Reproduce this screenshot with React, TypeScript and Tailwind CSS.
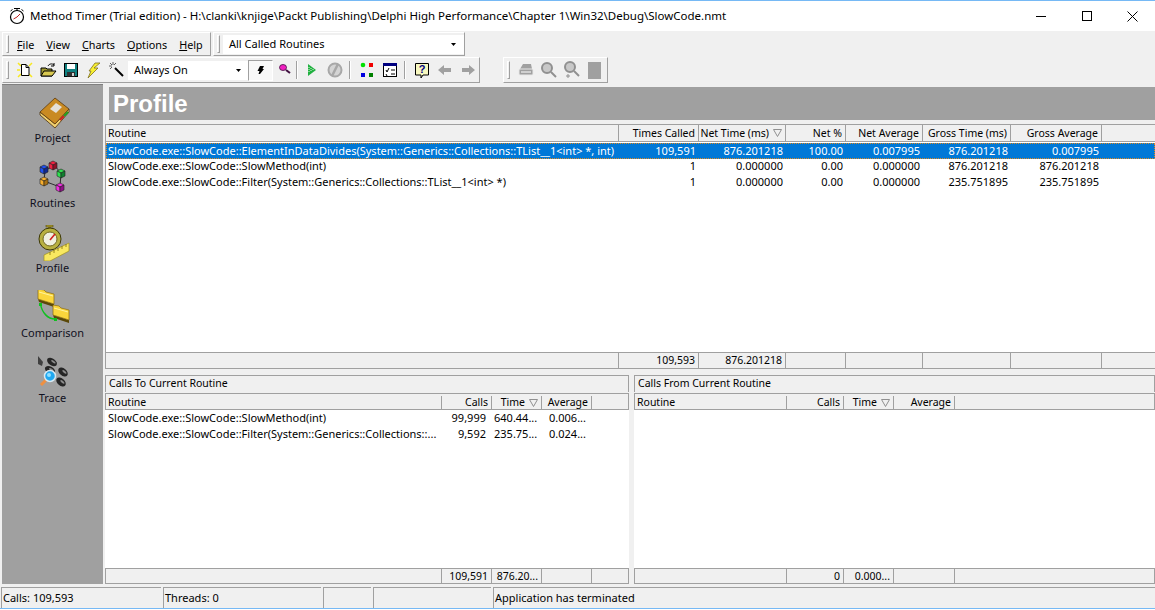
import type { ReactNode } from "react";

const MAIN_COLS = "grid grid-cols-[513px_80px_87px_60px_77px_88px_91px_1fr]";
const LEFT_COLS = "grid grid-cols-[336px_50px_50px_50px_1fr]";
const RIGHT_COLS = "grid grid-cols-[152px_57px_50px_61px_1fr]";

const ROWS = [
  ["SlowCode.exe::SlowCode::ElementInDataDivides(System::Generics::Collections::TList__1<int> *, int)", "109,591", "876.201218", "100.00", "0.007995", "876.201218", "0.007995"],
  ["SlowCode.exe::SlowCode::SlowMethod(int)", "1", "0.000000", "0.00", "0.000000", "876.201218", "876.201218"],
  ["SlowCode.exe::SlowCode::Filter(System::Generics::Collections::TList__1<int> *)", "1", "0.000000", "0.00", "0.000000", "235.751895", "235.751895"],
];

const CALLS_TO = [
  ["SlowCode.exe::SlowCode::SlowMethod(int)", "99,999", "640.44...", "0.006..."],
  ["SlowCode.exe::SlowCode::Filter(System::Generics::Collections::...", "9,592", "235.75...", "0.024..."],
];

function SortMark() {
  return (
    <svg width="9" height="8" viewBox="0 0 9 8" className="ml-[4px] shrink-0">
      <path d="M0.5 0.5H8.5L4.5 7.5Z" fill="none" stroke="#909090" />
    </svg>
  );
}

function Head({ children, right, sort, last }: { children?: ReactNode; right?: boolean; sort?: boolean; last?: boolean }) {
  return (
    <div className={`flex h-full items-center whitespace-nowrap pl-[2px] pr-[3px] text-[10.5px] ${right ? "justify-end" : ""} ${last ? "" : "border-r border-[#a0a0a0]"}`}>
      {children}
      {sort && <SortMark />}
    </div>
  );
}

function Cell({ children, right, pad }: { children?: ReactNode; right?: boolean; pad: string }) {
  return <div className={`overflow-hidden whitespace-nowrap ${pad} ${right ? "text-right" : ""}`}>{children}</div>;
}

function Bottom({ title, cols, heads, rows, foot }: { title: string; cols: string; heads: string[]; rows: string[][]; foot: string[] }) {
  return (
    <div className="flex h-full flex-1 flex-col">
      <div className="flex h-[17px] items-center border-x border-t border-[#a0a0a0] pl-[3px] text-[10.5px]">{title}</div>
      <div className={`${cols} mt-[1px] h-[17px] border border-[#a0a0a0] pt-[2px] leading-[13px]`}>
        {heads.map((h, i) => (
          <Head key={h} right={i > 0} sort={h === "Time"}>{h}</Head>
        ))}
        <div />
      </div>
      <div className="flex-1 bg-white pt-[1px]">
        {rows.map((r) => (
          <div key={r[0]} className={`${cols} h-[16px] leading-[14px]`}>
            {r.map((c, i) => (
              <Cell key={i} right={i > 0} pad="pl-[3px] pr-[5px]">{c}</Cell>
            ))}
          </div>
        ))}
      </div>
      <div className={`${cols} h-[16px] border border-[#a0a0a0] leading-[14px]`}>
        {foot.map((f, i) => (
          <Head key={i} right>{f}</Head>
        ))}
        <div />
      </div>
    </div>
  );
}

function Cube({ x, y, c, d }: { x: number; y: number; c: string; d: string }) {
  return (
    <g stroke="#202020" strokeWidth="0.6">
      <path d={`M${x} ${y - 2}L${x + 4} ${y - 4}L${x + 8} ${y - 2}L${x + 4} ${y}Z`} fill={c} />
      <path d={`M${x} ${y - 2}L${x + 4} ${y}V${y + 5}L${x} ${y + 3}Z`} fill={c} />
      <path d={`M${x + 8} ${y - 2}L${x + 4} ${y}V${y + 5}L${x + 8} ${y + 3}Z`} fill={d} />
    </g>
  );
}

function Folder({ x, y }: { x: number; y: number }) {
  return (
    <g>
      <path d={`M${x} ${y + 10}L${x + 16} ${y + 15}V${y + 18}L${x + 1} ${y + 13}Z`} fill="#5a4808" />
      <path d={`M${x} ${y}L${x + 6} ${y + 1}L${x + 8} ${y + 3}L${x + 16} ${y + 5}V${y + 15}L${x} ${y + 10}Z`} fill="#fbd63c" stroke="#8a6a10" strokeWidth="0.7" />
      <path d={`M${x + 1} ${y + 3}L${x + 15} ${y + 7}`} stroke="#fff4a0" strokeWidth="1" />
    </g>
  );
}

function Foot({ x, y, r }: { x: number; y: number; r: number }) {
  return (
    <g transform={`rotate(${r} ${x} ${y})`}>
      <ellipse cx={x} cy={y} rx="5.5" ry="3.5" fill="#262626" />
      <ellipse cx={x + 1} cy={y - 1} rx="2.6" ry="1" fill="#8c8c8c" />
    </g>
  );
}

function ProjectIcon() {
  return (
    <svg width="36" height="36" viewBox="0 0 36 36">
      <path d="M5 17L20 29L34 14V17L20 33L5 20Z" fill="#f0d070" stroke="#4a300c" strokeWidth="0.8" />
      <path d="M5 17L20 3L34 14L20 29Z" fill="#c98a22" stroke="#5a3a10" strokeWidth="0.8" />
      <path d="M15 14L21 8L27 12L21 18Z" fill="#e4e0d8" />
      <path d="M25 25L29 21" stroke="#d02020" strokeWidth="2" />
      <path d="M29 21L33 17" stroke="#20a020" strokeWidth="2" />
    </svg>
  );
}

function RoutinesIcon() {
  return (
    <svg width="36" height="36" viewBox="0 0 36 36">
      <path d="M10 11L19 5L26 13L25 27L9 21Z" fill="none" stroke="#101010" strokeWidth="0.8" />
      <Cube x={5} y={9} c="#2050f0" d="#102890" />
      <Cube x={14} y={5} c="#f02040" d="#901028" />
      <Cube x={22} y={13} c="#30e050" d="#108030" />
      <Cube x={5} y={21} c="#f8b030" d="#a87010" />
      <Cube x={21} y={27} c="#f030e0" d="#901088" />
    </svg>
  );
}

function ProfileIcon() {
  return (
    <svg width="36" height="36" viewBox="0 0 36 36">
      <rect x="11" y="0" width="7" height="2" fill="#b0a030" stroke="#504810" strokeWidth="0.6" />
      <rect x="13" y="2" width="3" height="3" fill="#807020" />
      <circle cx="15" cy="14" r="11" fill="#b8b040" stroke="#3c3808" strokeWidth="1" />
      <circle cx="15" cy="14" r="7" fill="#f0f0e0" stroke="#706820" strokeWidth="1" />
      <path d="M15 15L20 9" stroke="#d02020" strokeWidth="1.6" />
      <path d="M9 30L34 18V26L15 36H9Z" fill="#f8e860" stroke="#a09020" strokeWidth="0.7" />
      <path d="M15 27V30M19 25V28M23 23V26M27 21V24M31 19V22" stroke="#807010" strokeWidth="0.8" />
    </svg>
  );
}

function ComparisonIcon() {
  return (
    <svg width="36" height="36" viewBox="0 0 36 36">
      <Folder x={3} y={-1} />
      <Folder x={18} y={15} />
      <path d="M5.5 14C7 23 13 29 20 29" fill="none" stroke="#10c020" strokeWidth="1.5" />
      <rect x="4" y="13" width="3" height="3" fill="#10c020" />
      <rect x="19" y="28" width="3" height="3" fill="#10c020" />
    </svg>
  );
}

function TraceIcon() {
  return (
    <svg width="36" height="36" viewBox="0 0 36 36">
      <path d="M3 1L8 7L7 11L3 9Z" fill="#404040" />
      <Foot x={17} y={7} r={35} />
      <Foot x={15} y={15} r={30} />
      <Foot x={28} y={17} r={40} />
      <Foot x={26} y={27} r={40} />
      <path d="M6 30L11 25" stroke="#f09040" strokeWidth="3" />
      <circle cx="15" cy="21" r="5.5" fill="#20a8f0" stroke="#d8e8f0" strokeWidth="1.5" />
      <circle cx="14" cy="20" r="2" fill="#90e0ff" />
    </svg>
  );
}

const SIDE = [
  { label: "Project", icon: <ProjectIcon /> },
  { label: "Routines", icon: <RoutinesIcon /> },
  { label: "Profile", icon: <ProfileIcon /> },
  { label: "Comparison", icon: <ComparisonIcon /> },
  { label: "Trace", icon: <TraceIcon /> },
];

function Tool({ children, w }: { children: ReactNode; w?: string }) {
  return <div className={`flex h-full items-center justify-center ${w ?? "w-[23px]"}`}>{children}</div>;
}

function Ico({ children }: { children: ReactNode }) {
  return (
    <svg width="18" height="18" viewBox="0 0 18 18">
      {children}
    </svg>
  );
}

function Sep({ ml, mr }: { ml: string; mr: string }) {
  return <div className={`h-[18px] w-[2px] border-l border-[#a0a0a0] bg-white ${ml} ${mr}`} />;
}

function Grip() {
  return <div className="h-[18px] w-[3px] border border-t-white border-l-white border-b-[#a0a0a0] border-r-[#a0a0a0]" />;
}

function Drop() {
  return (
    <svg width="5" height="3" viewBox="0 0 5 3">
      <path d="M0 0H5L2.5 3Z" fill="#000" />
    </svg>
  );
}

const BAND = "flex items-center border border-t-white border-l-white border-b-[#a0a0a0] border-r-[#a0a0a0]";

export default function App() {
  return (
    <div className="flex h-[610px] w-[1155px] flex-col overflow-hidden bg-[#f0f0f0] font-['Noto_Sans',sans-serif] text-[11px] text-black">
      <div className="flex h-[31px] items-center border-t border-[#76b9f5] bg-white">
        <svg width="18" height="18" viewBox="0 0 18 18" className="ml-[8px]">
          <circle cx="9" cy="10" r="6.5" fill="#fff" stroke="#000" strokeWidth="1.2" />
          <path d="M6 1.5H12M9 2V4M2.5 4L4.5 2.5M15.5 4L13.5 2.5" stroke="#000" />
          <path d="M9 10L12 7M5.5 12L9 10" stroke="#c02020" />
        </svg>
        <div className="ml-[4px] flex-1 whitespace-nowrap text-[11.5px]">Method Timer (Trial edition) - H:\clanki\knjige\Packt Publishing\Delphi High Performance\Chapter 1\Win32\Debug\SlowCode.nmt</div>
        <div className="flex h-full">
          <div className="flex w-[46px] items-center justify-center">
            <div className="h-px w-[10px] bg-black" />
          </div>
          <div className="flex w-[45px] items-center justify-center">
            <div className="h-[10px] w-[10px] border border-black" />
          </div>
          <div className="flex w-[46px] items-center justify-center">
            <svg width="11" height="11" viewBox="0 0 11 11">
              <path d="M0.5 0.5L10.5 10.5M10.5 0.5L0.5 10.5" stroke="#000" />
            </svg>
          </div>
        </div>
      </div>

      <div className="flex h-[25px] pl-[2px] pt-[1px]">
        <div className={`${BAND} w-[209px] pl-[3px]`}>
          <Grip />
          <div className="ml-[8px] flex gap-[12px] pt-[2px] text-[10.8px]">
            <span><u>F</u>ile</span>
            <span><u>V</u>iew</span>
            <span><u>C</u>harts</span>
            <span><u>O</u>ptions</span>
            <span><u>H</u>elp</span>
          </div>
        </div>
        <div className={`${BAND} ml-[2px] w-[252px] pl-[3px]`}>
          <Grip />
          <div className="ml-[3px] flex h-[19px] w-[241px] items-center justify-between bg-white pl-[6px] pr-[8px]">
            <span>All Called Routines</span>
            <Drop />
          </div>
        </div>
      </div>

      <div className="mt-[1px] flex h-[26px] pl-[2px]">
        <div className={`${BAND} w-[478px] pl-[3px]`}>
          <Grip />
          <div className="ml-[4px] flex h-full items-center">
            <Tool>
              <Ico>
                <path d="M2 2L5 5M16 2L13 5M2 16L5 13M16 16L13 13M1 9H4" stroke="#f8e820" strokeWidth="1.5" />
                <path d="M5.5 3.5H10L13 6.5V14.5H5.5Z" fill="#fff" stroke="#000" />
                <path d="M10 3.5V6.5H13" fill="none" stroke="#000" />
              </Ico>
            </Tool>
            <Tool>
              <Ico>
                <path d="M2 7H7L8 8H13V15H2Z" fill="#a09a30" stroke="#000" />
                <path d="M2 15L5 10H17L13 15Z" fill="#d8c850" stroke="#000" />
                <path d="M9 5C10 3 13 2 15 4M15 2V5H12" fill="none" stroke="#000" />
              </Ico>
            </Tool>
            <Tool>
              <Ico>
                <rect x="2.5" y="2.5" width="13" height="13" fill="#108080" stroke="#000" />
                <rect x="5" y="3" width="8" height="5" fill="#fff" />
                <rect x="5" y="11" width="8" height="4.5" fill="#303030" />
                <rect x="10" y="12" width="2" height="3" fill="#d0d0d0" />
              </Ico>
            </Tool>
            <Tool>
              <Ico>
                <path d="M10 2H15L9 7H13L3 17L6 10H4Z" fill="#f8f030" stroke="#807020" strokeWidth="0.8" />
              </Ico>
            </Tool>
            <Tool>
              <Ico>
                <path d="M7 7L15 15" stroke="#000" strokeWidth="2" />
                <path d="M5 1V4M1 5H4M2 2L4 4M8 2L6 4M2 8L4 6" stroke="#606060" />
              </Ico>
            </Tool>
            <div className="flex h-[19px] w-[120px] items-center justify-between bg-white pl-[6px] pr-[7px]">
              <span>Always On</span>
              <Drop />
            </div>
            <div className="flex h-[21px] w-[25px] items-center justify-center border border-t-[#a0a0a0] border-l-[#a0a0a0] border-b-white border-r-white bg-[#f8f8f8]">
              <svg width="7" height="8" viewBox="0 0 7 8">
                <path d="M3 0H7L5.5 3H7L3 8H1.5L2.5 5H0.5Z" fill="#000" />
              </svg>
            </div>
            <Tool>
              <svg width="14" height="14" viewBox="0 0 14 14">
                <ellipse cx="5" cy="4.5" rx="3.5" ry="3" fill="#f020c0" stroke="#401040" strokeWidth="0.8" />
                <path d="M8 7L12 10" stroke="#401040" strokeWidth="2" />
              </svg>
            </Tool>
            <Sep ml="ml-0" mr="mr-[2px]" />
            <Tool>
              <Ico>
                <path d="M5 3L13 9L5 15Z" fill="#20b040" />
                <path d="M6 6V12M8 7V11M10 8V10" stroke="#d8f8d8" strokeDasharray="1 1" />
              </Ico>
            </Tool>
            <Tool>
              <Ico>
                <circle cx="9" cy="9" r="6.5" fill="#d4d4d4" stroke="#a8a8a8" strokeWidth="2" />
                <path d="M12 3L6 15" stroke="#a8a8a8" strokeWidth="2.5" />
              </Ico>
            </Tool>
            <Sep ml="ml-[3px]" mr="mr-[4px]" />
            <Tool>
              <Ico>
                <circle cx="5" cy="4" r="2.3" fill="#00e000" />
                <rect x="11" y="2" width="4" height="4" fill="#f00000" />
                <rect x="3" y="12" width="4" height="4" fill="#0000e0" />
                <rect x="11" y="12" width="4" height="4" fill="#008000" />
              </Ico>
            </Tool>
            <Tool>
              <Ico>
                <rect x="2.5" y="2.5" width="13" height="13" fill="#fff" stroke="#000" />
                <rect x="2" y="2" width="14" height="3" fill="#000080" />
                <path d="M5 9L6 11L8 7M5 13L6 15M10 9H14M10 13H14" fill="none" stroke="#000" />
              </Ico>
            </Tool>
            <Sep ml="ml-[3px]" mr="mr-[4px]" />
            <Tool>
              <Ico>
                <path d="M2.5 2.5H15.5V14H10L8 17V14H2.5Z" fill="#f8f8c0" stroke="#000" />
                <text x="9" y="12" textAnchor="middle" fontSize="11" fontWeight="700" fill="#000080" fontFamily="Liberation Sans">?</text>
              </Ico>
            </Tool>
            <Tool>
              <Ico>
                <path d="M2 9L8 4V7H15V11H8V14Z" fill="#a0a0a0" />
              </Ico>
            </Tool>
            <Tool>
              <Ico>
                <path d="M16 9L10 4V7H3V11H10V14Z" fill="#a0a0a0" />
              </Ico>
            </Tool>
          </div>
        </div>
        <div className={`${BAND} ml-[23px] w-[105px] pl-[3px]`}>
          <Grip />
          <div className="ml-[4px] flex h-full items-center">
            <Tool>
              <Ico>
                <path d="M6 3H14L15 8H3Z" fill="#a0a0a0" />
                <rect x="2" y="8" width="14" height="6" rx="1" fill="#a0a0a0" stroke="#e8e8e8" />
                <path d="M4 11H14" stroke="#fff" />
              </Ico>
            </Tool>
            <Tool>
              <Ico>
                <circle cx="7" cy="7" r="5" fill="#c8c8c8" stroke="#909090" strokeWidth="2" />
                <path d="M11 11L16 16" stroke="#909090" strokeWidth="2" />
              </Ico>
            </Tool>
            <Tool>
              <Ico>
                <circle cx="7" cy="6" r="5" fill="#c8c8c8" stroke="#909090" strokeWidth="2" />
                <path d="M11 10L16 15" stroke="#909090" strokeWidth="2" />
                <path d="M3 15H7M5 13V17" stroke="#909090" />
              </Ico>
            </Tool>
            <Tool>
              <div className="h-[17px] w-[13px] bg-[#a0a0a0]" />
            </Tool>
          </div>
        </div>
      </div>

      <div className="mt-[1px] flex h-[500px]">
        <div className="ml-[2px] w-[101px] border-t border-[#808080] bg-[#a0a0a0] pt-[10px] text-[#101020]">
          {SIDE.map((s) => (
            <div key={s.label} className="flex h-[65px] flex-col items-center">
              <div className="h-[36px]">{s.icon}</div>
              <div className="mt-[-1px] leading-[16px]">{s.label}</div>
            </div>
          ))}
        </div>
        <div className="ml-[2px] flex min-w-0 flex-1 flex-col">
          <div className="ml-[4px] mt-[3px] flex h-[33px] items-center bg-[#a0a0a0] pl-[4px] font-['Liberation_Sans',sans-serif] text-[24px] font-bold text-white">Profile</div>
          <div className="mt-[4px] flex h-[245px] flex-col border-t border-l border-[#a0a0a0]">
            <div className={`${MAIN_COLS} h-[17px] border-b border-[#a0a0a0] leading-[15px]`}>
              <Head>Routine</Head>
              <Head right>Times Called</Head>
              <Head right sort>Net Time (ms)</Head>
              <Head right>Net %</Head>
              <Head right>Net Average</Head>
              <Head right>Gross Time (ms)</Head>
              <Head right>Gross Average</Head>
              <div />
            </div>
            <div className="flex-1 bg-white pt-[1px]">
              {ROWS.map((r, i) => (
                <div key={r[0]} className={`${MAIN_COLS} h-[16px] leading-[14px] ${i === 0 ? "border border-dotted border-[#e08a20] bg-[#0078d7] text-white" : "border-x border-transparent"}`}>
                  {r.map((c, j) => (
                    <Cell key={j} right={j > 0} pad="pl-[1px] pr-[4px]">{c}</Cell>
                  ))}
                </div>
              ))}
            </div>
            <div className={`${MAIN_COLS} h-[17px] border-y border-[#a0a0a0] leading-[15px]`}>
              <Head />
              <Head right>109,593</Head>
              <Head right>876.201218</Head>
              <Head />
              <Head />
              <Head />
              <Head />
              <div />
            </div>
          </div>
          <div className="mt-[6px] flex h-[209px] gap-[5px]">
            <div className="w-[524px]">
              <Bottom
                title="Calls To Current Routine"
                cols={LEFT_COLS}
                heads={["Routine", "Calls", "Time", "Average"]}
                rows={CALLS_TO}
                foot={["", "109,591", "876.20...", ""]}
              />
            </div>
            <div className="flex-1">
              <Bottom
                title="Calls From Current Routine"
                cols={RIGHT_COLS}
                heads={["Routine", "Calls", "Time", "Average"]}
                rows={[]}
                foot={["", "0", "0.000...", ""]}
              />
            </div>
          </div>
        </div>
      </div>

      <div className="mt-[3px] flex h-[21px] gap-[2px] pl-[1px]">
        {[
          { t: "Calls: 109,593", w: "w-[160px]" },
          { t: "Threads: 0", w: "w-[158px]" },
          { t: "", w: "w-[48px]" },
          { t: "", w: "w-[118px]" },
          { t: "Application has terminated", w: "flex-1" },
        ].map((p, i) => (
          <div key={i} className={`${p.w} flex items-center border-l border-t border-[#a0a0a0] pl-[1px]`}>{p.t}</div>
        ))}
      </div>
      <div className="h-[1px] bg-[#76b9f5]" />
      <div className="h-[1px] bg-white" />
    </div>
  );
}
